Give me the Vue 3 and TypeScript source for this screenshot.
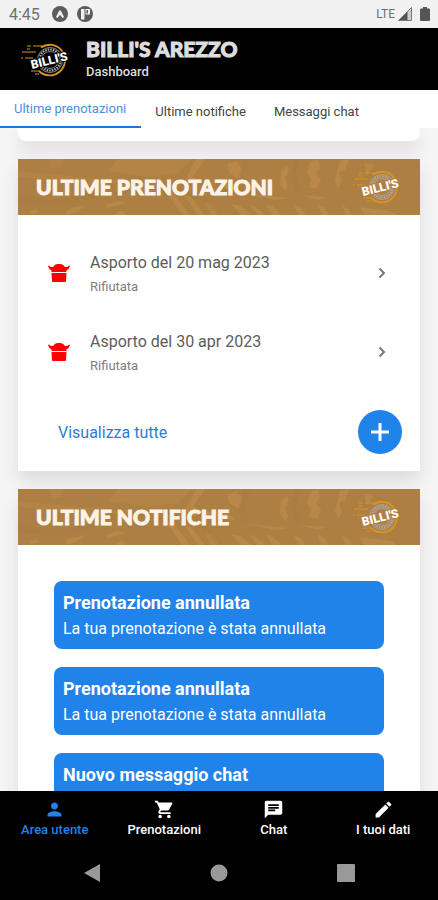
<script setup lang="ts">
import { ref } from 'vue'

interface Booking {
  id: number
  title: string
  status: string
}

interface Notice {
  id: number
  title: string
  body?: string
}

interface NavItem {
  label: string
  icon: string
}

const sections: string[] = ['Ultime prenotazioni', 'Ultime notifiche', 'Messaggi chat']
const activeSection = ref(0)

const bookings: Booking[] = [
  { id: 1, title: 'Asporto del 20 mag 2023', status: 'Rifiutata' },
  { id: 2, title: 'Asporto del 30 apr 2023', status: 'Rifiutata' },
]

const notices: Notice[] = [
  { id: 1, title: 'Prenotazione annullata', body: 'La tua prenotazione è stata annullata' },
  { id: 2, title: 'Prenotazione annullata', body: 'La tua prenotazione è stata annullata' },
  { id: 3, title: 'Nuovo messaggio chat' },
]

const navItems: NavItem[] = [
  {
    label: 'Area utente',
    icon: 'M12 12c2.21 0 4-1.79 4-4s-1.79-4-4-4-4 1.79-4 4 1.79 4 4 4zm0 2c-2.67 0-8 1.34-8 4v2h16v-2c0-2.66-5.33-4-8-4z',
  },
  {
    label: 'Prenotazioni',
    icon: 'M7 18c-1.1 0-1.99.9-1.99 2S5.9 22 7 22s2-.9 2-2-.9-2-2-2zM1 2v2h2l3.6 7.59-1.35 2.45c-.16.28-.25.61-.25.96 0 1.1.9 2 2 2h12v-2H7.42c-.14 0-.25-.11-.25-.25l.03-.12.9-1.63h7.45c.75 0 1.41-.41 1.75-1.03l3.58-6.49A1 1 0 0 0 20 4H5.21l-.94-2H1zm16 16c-1.1 0-1.99.9-1.99 2s.89 2 1.99 2 2-.9 2-2-.9-2-2-2z',
  },
  {
    label: 'Chat',
    icon: 'M20 2H4c-1.1 0-1.99.9-1.99 2L2 22l4-4h14c1.1 0 2-.9 2-2V4c0-1.1-.9-2-2-2zM6 9h12v2H6V9zm8 5H6v-2h8v2zm4-6H6V6h12v2z',
  },
  {
    label: 'I tuoi dati',
    icon: 'M3 17.25V21h3.75L17.81 9.94l-3.75-3.75L3 17.25zM20.71 7.04a1 1 0 0 0 0-1.41l-2.34-2.34a1 1 0 0 0-1.41 0l-1.83 1.83 3.75 3.75 1.83-1.83z',
  },
]
const activeNav = ref(0)
</script>

<template>
  <div class="screen">
    <svg class="defs" aria-hidden="true">
      <symbol id="emblem" viewBox="0 0 48 34">
        <g fill="none" stroke="#d9941e">
          <path d="M21 4.500a15.300 15.300 0 1 1-2 23.500" stroke-width="1.800" />
          <path d="M7 3h4M13 3h10M2 9h14M1 15h2M5 15h8M11 28h8M7 6h3M15 31h4" stroke-width="1.200" />
        </g>
        <g fill="none" class="logo-ring">
          <circle cx="30" cy="17" r="12.500" stroke-width=".8" />
          <circle cx="30" cy="17" r="10.500" stroke-width="2.200" stroke-dasharray="1.600 1" />
          <circle cx="30" cy="17" r="8.500" stroke-width=".8" />
        </g>
      </symbol>
      <symbol id="texture" viewBox="0 0 402 56" preserveAspectRatio="xMidYMid slice">
        <g fill="#c4924e" opacity=".5">
          <path d="M32 0h14l-3 8-10 1zM100 0h74l-14 14-30 4-40-6zM0 12l60 6 56 4-40 4-76-8z" opacity=".55" />
          <path d="M178 0h9l-12 18 10 4-8 5-10-5z" />
          <path d="M209 5l10-3 5 8-3 10-9-5zM202 23l8 2 8 6-12-2z" />
          <path d="M263 12l6-5 2 4-4 8 3 8-3 5-5-7z" />
          <path d="M292 3l8-3 2 8-4 6 5 7-4 9-9-2 3-8-4-6z" />
          <path d="M322 2l9-2-4 11-6 2 3 9-4 8-3-8 2-8z" />
          <path d="M346 4l10 2-7 10zM186 22l9 1-8 7z" />
          <path d="M148 32l10 5 14 19h-8zM166 36l7 2 14 18h-7zM187 43l7 2 7 11h-8zM213 45l9 2 12 9h-11zM231 46l5 1 12 9h-8zM248 46l6 1 10 9h-9z" />
          <path d="M276 47l7 2 5 7h-7zM299 45l8 4 4 7h-7zM324 46l7 5 3 5h-6zM342 48l30 4 7 4h-33z" />
          <path d="M50 50l18-4-9 7-12 3zM88 46l12-4 8 2-18 5zM10 53l7-3 5 3-9 2zM96 56l8-5 4 5zM230 35l40 4-12 2zM282 36l26 2-8 3z" />
        </g>
        <g fill="#98703a" opacity=".15">
          <path d="M150 20l20 12 18 5 14 19h-4l-18-20-22-5-26 5zM225 0h8l-7 16 6 14-7 4-5-14zM276 0h6l-4 17 5 14-5 3-4-15zM0 36l30 5 60-8-40 14-50-3z" />
        </g>
      </symbol>
    </svg>

    <div class="status">
      <span class="clock">4:45</span>
      <svg class="status-icon" viewBox="0 0 16 16" aria-hidden="true">
        <circle cx="8" cy="8" r="8" fill="#5c5c5c" />
        <path d="M4 11 7 5Q8 3.500 9 5l3 6-1.500 1L8 8.700 5.500 12z" fill="#f1f1f1" />
      </svg>
      <svg class="status-icon" viewBox="0 0 16 16" aria-hidden="true">
        <circle cx="8" cy="8" r="8" fill="#5c5c5c" />
        <path d="M4 3h3.500v10.500H4zM8.500 3h4.500v5.500H8.500z" fill="#f1f1f1" />
        <path d="M9.500 4h1.500v3.500H9.500z" fill="#5c5c5c" />
      </svg>
      <span class="lte">LTE</span>
      <svg class="signal" viewBox="0 0 14 14" aria-hidden="true">
        <path d="M13.500.500v13H.500z" fill="#ccc" />
        <path d="M9.500 4.500v9h-9z" fill="#555" />
        <path d="M13.500.500v13H.500z" fill="none" stroke="#777" />
      </svg>
      <svg class="battery" viewBox="0 0 10 14" aria-hidden="true">
        <path d="M3 0h4v1.500h2q1 0 1 1V13q0 1-1 1H1q-1 0-1-1V2.500q0-1 1-1h2z" fill="#555" />
      </svg>
    </div>

    <header class="brand">
      <svg class="logo" viewBox="0 0 48 34">
        <use href="#emblem" />
        <text x="12" y="26" transform="rotate(-14 12 26)" class="logo-word">BILLI'S</text>
      </svg>
      <div>
        <h1>BILLI'S AREZZO</h1>
        <p>Dashboard</p>
      </div>
    </header>

    <nav class="tabs">
      <button
        v-for="(section, i) in sections"
        :key="section"
        type="button"
        :class="['tab', { active: i === activeSection }]"
        @click="activeSection = i"
      >{{ section }}</button>
    </nav>

    <main>
      <div class="card previous"></div>

      <section class="card">
        <div class="banner">
          <svg class="texture" aria-hidden="true"><use href="#texture" /></svg>
          <h2>ULTIME PRENOTAZIONI</h2>
          <svg class="logo" viewBox="0 0 48 34">
            <use href="#emblem" />
            <text x="11" y="26" transform="rotate(-14 11 26)" class="logo-word">BILLI'S</text>
          </svg>
        </div>
        <ul class="bookings">
          <li v-for="booking in bookings" :key="booking.id">
            <a href="#" class="booking">
              <svg class="takeaway" viewBox="0 0 22 18" aria-hidden="true">
                <path d="M0 2 1 1.500Q2.500 3.500 5 3 7 0 9.500 0h3Q15 0 17 3q2.500.500 4-1.500l1 .500Q21 5.500 18.500 6.500V8h-15V6.500Q1 5.500 0 2z" />
                <path d="M3.500 9h15L18 17q0 1-1 1H5q-1 0-1-1z" />
              </svg>
              <span class="booking-text">
                <span class="booking-title">{{ booking.title }}</span>
                <span class="booking-status">{{ booking.status }}</span>
              </span>
              <svg class="chevron" viewBox="0 0 8 12" aria-hidden="true"><path d="M1.500 1.500 6 6l-4.500 4.500" /></svg>
            </a>
          </li>
        </ul>
        <div class="actions">
          <a href="#" class="see-all">Visualizza tutte</a>
          <button type="button" class="add" aria-label="Nuova prenotazione">
            <svg viewBox="0 0 20 20" aria-hidden="true"><path d="M10 1v18M1 10h18" /></svg>
          </button>
        </div>
      </section>

      <section class="card">
        <div class="banner">
          <svg class="texture" aria-hidden="true"><use href="#texture" /></svg>
          <h2>ULTIME NOTIFICHE</h2>
          <svg class="logo" viewBox="0 0 48 34">
            <use href="#emblem" />
            <text x="11" y="26" transform="rotate(-14 11 26)" class="logo-word">BILLI'S</text>
          </svg>
        </div>
        <div class="notices">
          <article v-for="notice in notices" :key="notice.id" class="notice">
            <h3>{{ notice.title }}</h3>
            <p>{{ notice.body }}</p>
          </article>
        </div>
      </section>
    </main>

    <nav class="bottom-nav">
      <button
        v-for="(item, i) in navItems"
        :key="item.label"
        type="button"
        :class="['nav-item', { active: i === activeNav }]"
        @click="activeNav = i"
      >
        <svg viewBox="0 0 24 24" aria-hidden="true"><path :d="item.icon" /></svg>
        <span>{{ item.label }}</span>
      </button>
    </nav>

    <div class="system-nav">
      <button type="button" aria-label="Indietro">
        <svg viewBox="0 0 18 18"><path d="M17 0v18L1 9z" /></svg>
      </button>
      <button type="button" aria-label="Home">
        <svg viewBox="0 0 18 18"><circle cx="9" cy="9" r="8.500" /></svg>
      </button>
      <button type="button" aria-label="Recenti">
        <svg viewBox="0 0 18 18"><rect width="18" height="18" rx="1" /></svg>
      </button>
    </div>
  </div>
</template>

<style>
body {
  margin: 0;
}
</style>

<style scoped>
.screen {
  display: flex;
  flex-direction: column;
  height: 100vh;
  overflow: hidden;
  background: #f5f5f5;
  font-family: Roboto, "Liberation Sans", sans-serif;
  color: #5c5c5c;
}

h1, h2, h3, p, ul {
  margin: 0;
  padding: 0;
}

button {
  border: 0;
  padding: 0;
  background: none;
  font: inherit;
  color: inherit;
  cursor: pointer;
}

a {
  color: inherit;
  text-decoration: none;
}

.defs {
  position: absolute;
  width: 0;
  height: 0;
}

.status {
  display: flex;
  flex: none;
  align-items: center;
  height: 28px;
  padding: 0 8px 0 9px;
  background: #f1f1f1;
}

.clock {
  margin-right: 12px;
  font-size: 16px;
  color: #707070;
}

.status-icon {
  width: 16px;
  height: 16px;
  margin-right: 9px;
}

.lte {
  margin-left: auto;
  font-size: 12px;
  color: #707070;
}

.signal {
  width: 14px;
  height: 14px;
  margin: 0 8px 0 3px;
}

.battery {
  width: 10px;
  height: 14px;
}

.brand {
  display: flex;
  box-sizing: border-box;
  flex: none;
  align-items: center;
  gap: 18px;
  height: 62px;
  padding: 2px 20px 0;
  background: #000;
  color: #ddd;
}

.logo {
  position: relative;
  flex: none;
  width: 48px;
  height: 34px;
  overflow: visible;
}

.logo-ring {
  stroke: #aaa;
}

.logo-word {
  fill: #fff;
  stroke: #000;
  stroke-width: 2px;
  paint-order: stroke;
  font: 900 12px Roboto, sans-serif;
}

h1, h2 {
  font-family: Lato, "Liberation Sans", sans-serif;
  font-size: 21px;
  font-weight: 900;
  line-height: 24px;
  -webkit-text-stroke: 1px currentColor;
}

.brand p {
  font-size: 13px;
  font-weight: 500;
  line-height: 22px;
}

.tabs {
  display: flex;
  flex: none;
  height: 38px;
  background: #fff;
}

.tab {
  box-sizing: border-box;
  padding: 4px 14px 0;
  font-size: 13px;
  color: #444;
}

.tab.active {
  padding: 0 15px 0 14px;
  border-bottom: 2px solid #1f75dc;
  color: #4a90e2;
}

main {
  display: flex;
  flex: 1;
  flex-direction: column;
  gap: 18px;
  min-height: 0;
  padding: 0 18px;
  overflow: hidden;
}

.card {
  flex: none;
  background: #fff;
  box-shadow: 0 10px 16px rgba(0, 0, 0, 0.1);
}

.previous {
  height: 13px;
  border-radius: 0 0 8px 8px;
}

.banner {
  position: relative;
  display: flex;
  align-items: center;
  justify-content: space-between;
  height: 56px;
  padding: 0 20px 0 18px;
  background: #ae7f43;
  color: #fbf3e6;
}

.texture {
  position: absolute;
  inset: 0;
  width: 100%;
  height: 100%;
}

.banner h2 {
  position: relative;
}

.banner .logo-ring {
  stroke: #e3cba6;
}

.banner .logo-word {
  stroke: #ae7f43;
}

.bookings {
  padding-top: 18px;
  list-style: none;
}

.booking {
  display: flex;
  align-items: center;
  height: 79px;
  padding: 0 34px 0 30px;
}

.takeaway {
  width: 22px;
  height: 18px;
  margin-right: 20px;
  fill: #f00;
}

.booking-text {
  display: flex;
  flex: 1;
  flex-direction: column;
  padding-top: 4px;
}

.booking-title {
  font-size: 16px;
  line-height: 24px;
}

.booking-status {
  font-size: 13px;
  line-height: 24px;
  color: #808080;
}

.chevron {
  width: 8px;
  height: 12px;
  fill: none;
  stroke: #777;
  stroke-width: 2;
}

.actions {
  display: flex;
  box-sizing: border-box;
  align-items: center;
  justify-content: space-between;
  height: 80px;
  padding: 2px 18px 0 40px;
}

.see-all {
  font-size: 16px;
  color: #2f7bd9;
}

.add {
  display: grid;
  place-items: center;
  width: 44px;
  height: 44px;
  border-radius: 50%;
  background: #1f83e9;
}

.add svg {
  width: 20px;
  height: 20px;
  stroke: #fff;
  stroke-width: 3;
}

.notices {
  display: grid;
  gap: 18px;
  padding: 36px;
}

.notice {
  box-sizing: border-box;
  min-height: 68px;
  padding: 8px 9px 7px;
  border-radius: 8px;
  background: #1f83e9;
  color: #fff;
}

.notice h3 {
  font-size: 18px;
  font-weight: 700;
  line-height: 27px;
}

.notice p {
  font-size: 16px;
  line-height: 26px;
}

.bottom-nav {
  display: grid;
  flex: none;
  grid-template-columns: repeat(4, 1fr);
  height: 55px;
  background: #000;
  color: #fff;
}

.nav-item {
  display: flex;
  flex-direction: column;
  align-items: center;
  padding-top: 8px;
  font-size: 13px;
  font-weight: 500;
  line-height: 20px;
}

.nav-item svg {
  width: 21px;
  height: 21px;
  fill: currentColor;
}

.nav-item.active {
  color: #1f83e9;
}

.system-nav {
  display: grid;
  flex: none;
  grid-template-columns: repeat(3, 1fr);
  height: 54px;
  padding: 0 28px;
  background: #000;
}

.system-nav button {
  display: grid;
  place-items: center;
}

.system-nav svg {
  width: 18px;
  height: 18px;
  fill: #999;
}
</style>
